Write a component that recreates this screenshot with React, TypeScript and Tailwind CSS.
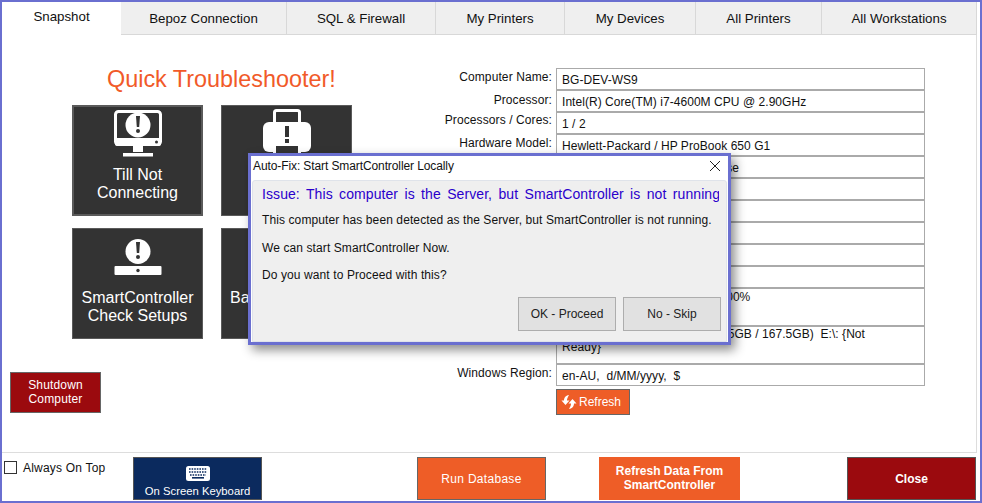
import type { ReactNode } from "react";

const TABS = [
  { label: "Snapshot", width: "w-[119px]" },
  { label: "Bepoz Connection", width: "w-[166px]" },
  { label: "SQL & Firewall", width: "w-[149px]" },
  { label: "My Printers", width: "w-[129px]" },
  { label: "My Devices", width: "w-[131px]" },
  { label: "All Printers", width: "w-[126px]" },
  { label: "All Workstations", width: "w-[155px]" },
];

// rows 5-12 sit mostly under the dialog, only their right ends show
const ROWS = [
  { label: "Computer Name:", value: "BG-DEV-WS9", labelPad: "pt-[2px]", box: "h-[22px] pt-[5px]" },
  { label: "Processor:", value: "Intel(R) Core(TM) i7-4600M CPU @ 2.90GHz", labelPad: "pt-[3px]", box: "h-[22px] pt-[5px]" },
  { label: "Processors / Cores:", value: "1 / 2", labelPad: "pt-[1px]", box: "h-[22px] pt-[5px]" },
  { label: "Hardware Model:", value: "Hewlett-Packard / HP ProBook 650 G1", labelPad: "pt-[2px]", box: "h-[22px] pt-[5px]" },
  { label: "", value: "Microsoft Windows 10 Enterprise", labelPad: "pt-[2px]", box: "h-[22px] pt-[5px]" },
  { label: "", value: "", labelPad: "pt-[2px]", box: "h-[22px] pt-[5px]" },
  { label: "", value: "", labelPad: "pt-[2px]", box: "h-[22px] pt-[5px]" },
  { label: "", value: "", labelPad: "pt-[2px]", box: "h-[22px] pt-[5px]" },
  { label: "", value: "", labelPad: "pt-[2px]", box: "h-[22px] pt-[5px]" },
  { label: "", value: "", labelPad: "pt-[2px]", box: "h-[22px] pt-[5px]" },
  { label: "", value: "14.2GB / 16GB Used,  Load: 100%", labelPad: "pt-[2px]", box: "h-[38px] pt-[2px]" },
  { label: "", value: "C:\\: (41.5GB / 237GB)  D:\\:  (8.5GB / 167.5GB)  E:\\: {Not\nReady}", labelPad: "pt-[2px]", box: "h-[38px] pt-[1px]" },
  { label: "Windows Region:", value: "en-AU,  d/MM/yyyy,  $", labelPad: "pt-[2px]", box: "h-[22px] pt-[5px]" },
];

function MonitorIcon() {
  return (
    <svg width="48" height="47" viewBox="0 0 48 47">
      <rect x="1.5" y="1.5" width="45" height="33" rx="3" fill="#333" stroke="#fff" strokeWidth="3" />
      <rect x="1" y="28" width="46" height="8" rx="2" fill="#fff" />
      <circle cx="42.5" cy="32" r="1.5" fill="#333" />
      <circle cx="24" cy="15" r="12.5" fill="#fff" />
      <path d="M22 6h4l-.8 11h-2.4z" fill="#333" />
      <circle cx="24" cy="21" r="2" fill="#333" />
      <rect x="19" y="36" width="10" height="6" fill="#fff" />
      <rect x="9" y="43" width="30" height="3.5" fill="#fff" />
    </svg>
  );
}

function PrinterIcon() {
  return (
    <svg width="48" height="48" viewBox="0 -1 48 48" className="-mt-[1px]">
      <rect x="11.5" y="0.5" width="25" height="14" rx="2" fill="#333" stroke="#fff" strokeWidth="3" />
      <rect x="0" y="12" width="48" height="30" rx="6" fill="#fff" />
      <rect x="10" y="36" width="28" height="11" fill="#fff" />
      <rect x="13" y="36" width="22" height="8" fill="#333" />
      <rect x="22" y="16" width="4" height="11" fill="#333" />
      <rect x="22" y="29" width="4" height="4" fill="#333" />
    </svg>
  );
}

function ControllerIcon() {
  return (
    <svg width="48" height="47" viewBox="0 0 48 47">
      <circle cx="24" cy="18.5" r="12.5" fill="#fff" />
      <path d="M22 9h4l-.8 11h-2.4z" fill="#333" />
      <circle cx="24" cy="24" r="2" fill="#333" />
      <rect x="0.5" y="33" width="47" height="9" rx="1" fill="#fff" />
      <circle cx="24" cy="37.5" r="1.7" fill="#333" />
    </svg>
  );
}

function KeyboardIcon() {
  return (
    <svg width="24" height="15" viewBox="0 0 24 15">
      <rect width="24" height="15" rx="2.5" fill="#fff" />
      <path d="M3 3h18M3 6h18" stroke="#0b2a5e" strokeWidth="1.4" strokeDasharray="1.6 1" />
      <path d="M4 9h16" stroke="#0b2a5e" strokeWidth="1.4" strokeDasharray="1.6 1" />
      <rect x="6" y="11" width="12" height="1.6" fill="#0b2a5e" />
    </svg>
  );
}

function RefreshIcon() {
  return (
    <svg width="16" height="16" viewBox="0 0 16 16" fill="#fff">
      <path d="M8 1C4.5 1.500 3 4 3 6.500H.5L4.500 11l4-4.500H6C6 5 6.500 3.500 8 1z" />
      <path d="M8 15c3.500-.5 5-3 5-5.500h2.500L11.500 5l-4 4.500H10c0 1.500-.5 3-2 5.500z" />
    </svg>
  );
}

function Tile({ icon, lines, focused }: { icon: ReactNode; lines: string[]; focused?: boolean }) {
  return (
    <div
      className={`flex h-[111px] w-[131px] flex-col items-center border border-[#5a5a5a] bg-[#333333] pt-[4px] text-[16px] leading-[18px] text-white ${
        focused ? "shadow-[inset_0_0_0_1px_#5a5a5a]" : ""
      }`}
    >
      {icon}
      <div className="mt-[9px] text-center">
        {lines.map((line) => (
          <div key={line} className="whitespace-nowrap">{line}</div>
        ))}
      </div>
    </div>
  );
}

function Dialog() {
  return (
    <div className="absolute left-[246px] top-[151px] h-[192px] w-[483px] border-[3px] border-[#6a6fd0] bg-white shadow-[4px_5px_10px_rgba(0,0,0,0.45)]">
      <div className="flex h-[24px] items-center justify-between pb-[4px] pl-[2px] pr-[7px] text-[12px] tracking-[-0.1px] text-[#111]">
        <span>Auto-Fix: Start SmartController Locally</span>
        <svg width="12" height="12" viewBox="0 0 12 12" stroke="#222" strokeWidth="1">
          <path d="M1 1l10 10M11 1L1 11" />
        </svg>
      </div>
      <div className="ml-[1px] h-[162px] w-[475px] rounded-t-[3px] border border-[#dfe3ea] bg-[#efefef] pl-[9px] pt-[4px]">
        <div className="h-[18px] w-[457px] overflow-hidden whitespace-nowrap text-[14px] leading-[18px] tracking-[0.08px] text-[#2a00cc] [word-spacing:2.4px]">
          Issue: This computer is the Server, but SmartController is not running
        </div>
        <div className="mt-[10px] text-[12px] leading-[14px] tracking-[0.1px] text-[#111]">
          This computer has been detected as the Server, but SmartController is not running.
        </div>
        <div className="mt-[14px] text-[12px] leading-[14px] tracking-[0.1px] text-[#111]">We can start SmartController Now.</div>
        <div className="mt-[13px] text-[12px] leading-[14px] tracking-[0.1px] text-[#111]">Do you want to Proceed with this?</div>
        <div className="mt-[15px] flex justify-end gap-[7px] pr-[5px]">
          <div className="flex h-[34px] w-[98px] items-center justify-center border border-[#adadad] bg-[#e1e1e1] text-[12px] text-[#222]">OK - Proceed</div>
          <div className="flex h-[34px] w-[98px] items-center justify-center border border-[#adadad] bg-[#e1e1e1] text-[12px] text-[#222]">No - Skip</div>
        </div>
      </div>
    </div>
  );
}

export default function App() {
  return (
    <div className="relative box-border h-[503px] w-[982px] overflow-hidden border-2 border-[#6a6fd0] bg-white font-[family-name:'Liberation_Sans',Arial,sans-serif] text-[12px] text-[#111]">
      <div className="flex h-[33px] w-[975px]">
        {TABS.map((tab, i) =>
          i === 0 ? (
            <div key={tab.label} className={`${tab.width} pt-[7px] text-center text-[13.3px] leading-[16px]`}>
              {tab.label}
            </div>
          ) : (
            <div key={tab.label} className={`${tab.width} box-border border-b border-r border-[#d8d8d8] bg-[#efefef] pt-[9px] text-center text-[13.3px] leading-[16px]`}>
              {tab.label}
            </div>
          ),
        )}
      </div>

      <div className="flex h-[418px] w-[975px] border-b border-r border-[#dddddd]">
        <div className="w-[420px]">
          <div className="ml-[105px] mt-[30px] text-[23.4px] leading-[28px] text-[#f15a29]">Quick Troubleshooter!</div>
          <div className="ml-[70px] mt-[12px] grid w-[280px] grid-cols-[131px_131px] gap-x-[18px] gap-y-[12px]">
            <Tile focused icon={<MonitorIcon />} lines={["Till Not", "Connecting"]} />
            <Tile icon={<PrinterIcon />} lines={[]} />
            <Tile icon={<ControllerIcon />} lines={["SmartController", "Check Setups"]} />
            <Tile icon={<ControllerIcon />} lines={["Backups Failing"]} />
          </div>
          <div className="ml-[8px] mt-[33px] flex h-[41px] w-[91px] flex-col items-center justify-center border border-[#666666] bg-[#9b0a0e] pb-[2px] leading-[14px] tracking-[0.15px] text-white">
            <div>Shutdown</div>
            <div>Computer</div>
          </div>
        </div>

        <div className="pt-[33px]">
          {ROWS.map((row, i) => (
            <div key={i} className="flex">
              <div className={`w-[130px] whitespace-nowrap text-right leading-[14px] tracking-[0.1px] ${row.labelPad}`}>{row.label}</div>
              <div className={`ml-[4px] box-border w-[369px] whitespace-pre-wrap border border-[#aaaaaa] pl-[5px] leading-[13px] tracking-[0.05px] ${row.box}`}>{row.value}</div>
            </div>
          ))}
          <div className="ml-[134px] mt-[3px] flex h-[26px] w-[74px] items-center gap-[2px] border border-[#666666] bg-[#ee5d27] pl-[4px] text-white">
            <RefreshIcon />
            <span>Refresh</span>
          </div>
        </div>
      </div>

      <div className="flex h-[48px] w-[975px] items-start pt-[4px]">
        <div className="ml-[2px] mt-[4px] h-[13px] w-[13px] border border-[#333333] bg-white" />
        <div className="ml-[6px] mt-[4px] w-[110px] leading-[14px] tracking-[0.2px]">Always On Top</div>
        <div className="flex h-[43px] w-[129px] flex-col items-center justify-between border border-[#555555] bg-[#0b2a5e] pb-[1px] pt-[8px] text-white">
          <KeyboardIcon />
          <span className="text-[11.3px] leading-[14px]">On Screen Keyboard</span>
        </div>
        <div className="ml-[155px] flex h-[43px] w-[129px] items-center justify-center border border-[#666666] bg-[#ee5d27] tracking-[0.3px] text-white">Run Database</div>
        <div className="ml-[53px] flex h-[43px] w-[141px] flex-col items-center justify-center bg-[#ee5d27] pb-[2px] font-bold leading-[14px] text-white">
          <div>Refresh Data From</div>
          <div>SmartController</div>
        </div>
        <div className="ml-[107px] flex h-[43px] w-[129px] items-center justify-center border border-[#555555] bg-[#9b0a0e] font-bold text-white">Close</div>
      </div>

      <Dialog />
    </div>
  );
}
